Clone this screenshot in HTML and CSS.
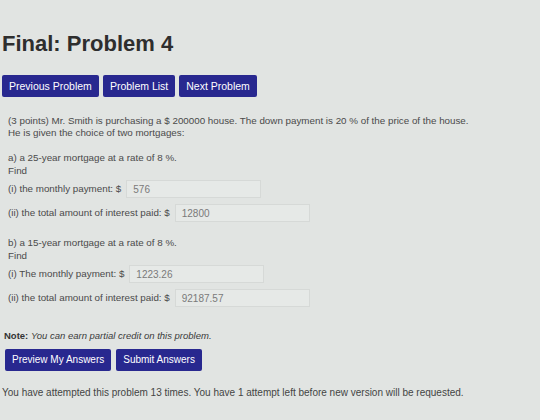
FILE: index.html
```html
<!DOCTYPE html>
<html>
<head>
<meta charset="utf-8">
<link rel="stylesheet" href="styles.css">
</head>
<body>
<div class="page">
  <h1 class="title">Final: Problem 4</h1>
  <div class="nav">
    <span class="btn">Previous Problem</span>
    <span class="btn">Problem List</span>
    <span class="btn">Next Problem</span>
  </div>
  <div class="problem">
    <p class="intro">(3 points) Mr. Smith is purchasing a $ 200000 house. The down payment is 20 % of the price of the house.<br>He is given the choice of two mortgages:</p>
    <div class="part">
      <div class="line">a) a 25-year mortgage at a rate of 8 %.</div>
      <div class="line">Find</div>
      <div class="row"><span>(i) the monthly payment: $</span><span class="input">576</span></div>
      <div class="row"><span>(ii) the total amount of interest paid: $</span><span class="input">12800</span></div>
    </div>
    <div class="part partb">
      <div class="line">b) a 15-year mortgage at a rate of 8 %.</div>
      <div class="line">Find</div>
      <div class="row"><span>(i) The monthly payment: $</span><span class="input">1223.26</span></div>
      <div class="row"><span>(ii) the total amount of interest paid: $</span><span class="input">92187.57</span></div>
    </div>
  </div>
  <p class="note"><b>Note:</b> <i>You can earn partial credit on this problem.</i></p>
  <div class="actions">
    <span class="btn">Preview My Answers</span>
    <span class="btn">Submit Answers</span>
  </div>
  <p class="attempts">You have attempted this problem 13 times. You have 1 attempt left before new version will be requested.</p>
</div>
</body>
</html>
```
FILE: styles.css
```css
html, body {
  margin: 0;
  padding: 0;
  background: #e1e4e2;
}
body {
  font-family: "Liberation Sans", Arial, sans-serif;
  color: #444;
  width: 540px;
  height: 420px;
  overflow: hidden;
}
.page {
  padding: 0 0 0 2px;
}
.title {
  margin: 0;
  padding-top: 31px;
  font-size: 22px;
  line-height: 26px;
  font-weight: bold;
  color: #2e2e2e;
}
.nav {
  display: flex;
  gap: 4px;
  margin-top: 18px;
}
.nav .btn {
  font-size: 10.5px;
}
.btn {
  display: inline-block;
  background: #28288f;
  color: #fff;
  font-size: 10px;
  line-height: 14px;
  padding: 4px 7px;
  border-radius: 2px;
}
.problem {
  margin-top: 18px;
  padding-left: 6px;
  font-size: 9.8px;
  color: #4a4a4a;
}
.intro {
  margin: 0;
  line-height: 12px;
}
.part {
  margin-top: 13px;
}
.partb {
  margin-top: 15px;
}
.line {
  line-height: 12.5px;
}
.row {
  display: flex;
  align-items: center;
  gap: 5px;
  margin-top: 2px;
  height: 19px;
}
.row + .row {
  margin-top: 5px;
}
.input {
  display: inline-block;
  width: 135px;
  height: 18px;
  line-height: 18px;
  padding-left: 6px;
  box-sizing: border-box;
  border: 1px solid #d6d9d7;
  background: #e6e9e7;
  color: #7a7a7a;
  font-size: 10px;
}
.note {
  margin: 23px 0 0 2px;
  font-size: 9.5px;
  line-height: 12px;
  color: #3a3a3a;
}
.note b {
  color: #333;
}
.actions {
  display: flex;
  gap: 5px;
  margin-top: 7px;
  padding-left: 3px;
}
.attempts {
  margin: 16px 0 0 0;
  font-size: 10px;
  line-height: 12px;
  color: #444;
  white-space: nowrap;
}
```
